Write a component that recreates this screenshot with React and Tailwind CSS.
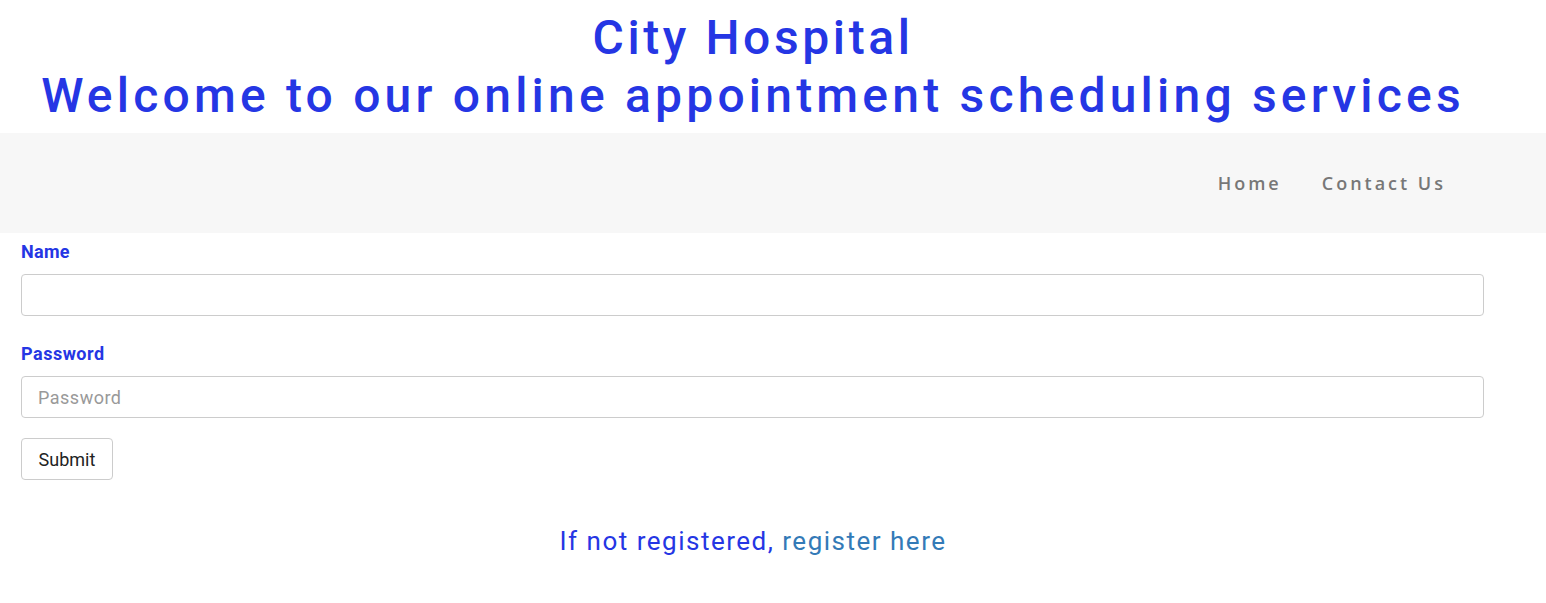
export default function App() {
  return (
    <div className="min-h-[603px] bg-white font-['Roboto','Liberation_Sans',sans-serif]">
      <div className="w-[1506px] text-center text-[48px] leading-[58px] font-medium text-[#2536e4] pt-[9px] pb-[8px]">
        <div className="tracking-[3.6px]">City Hospital</div>
        <div className="tracking-[4.2px]">Welcome to our online appointment scheduling services</div>
      </div>

      <nav className="h-[100px] bg-[#f7f7f7] flex items-center justify-end pr-[85px]">
        <a className="text-[18px] tracking-[3px] font-semibold text-[#777] font-['Open_Sans',sans-serif] px-[15px]" href="#">
          Home
        </a>
        <a className="text-[18px] tracking-[3px] font-semibold text-[#777] font-['Open_Sans',sans-serif] px-[15px] ml-[10px]" href="#">
          Contact Us
        </a>
      </nav>

      <form className="w-[1506px] px-[21px] pt-[8px]" onSubmit={(e) => e.preventDefault()}>
        <div className="mb-[27px]">
          <label className="block text-[18px] font-bold tracking-[0.3px] text-[#2536e4] mb-[11px] leading-[22px]">Name</label>
          <input type="text" className="w-[1463px] h-[42px] border border-[#ccc] rounded-[4px] px-[16px] text-[18px] outline-none" />
        </div>
        <div className="mb-[20px]">
          <label className="block text-[18px] font-bold tracking-[0.5px] text-[#2536e4] mb-[11px] leading-[22px]">Password</label>
          <input
            type="password"
            placeholder="Password"
            className="w-[1463px] h-[42px] border border-[#ccc] rounded-[4px] px-[16px] text-[18px] tracking-[0.5px] placeholder:text-[#999] outline-none"
          />
        </div>
        <button type="submit" className="w-[92px] h-[42px] border border-[#ccc] rounded-[4px] bg-white text-[18px] text-[#222]">
          Submit
        </button>
      </form>

      <p className="w-[1506px] text-center text-[26px] tracking-[1.5px] text-[#2536e4] mt-[42px]">
        If not registered, <a href="#" className="text-[#337ab7]">register here</a>
      </p>
    </div>
  );
}
